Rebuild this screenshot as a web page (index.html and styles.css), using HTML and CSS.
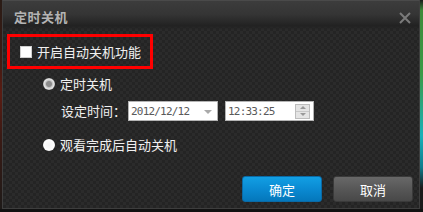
FILE: index.html
```html
<!DOCTYPE html>
<html lang="zh-CN">
<head>
<meta charset="utf-8">
<title>定时关机</title>
<link rel="stylesheet" href="styles.css">
</head>
<body>
<div class="stage">
  <div class="edge-left"></div>
  <div class="dialog">
    <div class="titlebar">
      <span class="title">定时关机</span>
      <svg class="close" width="12" height="12" viewBox="0 0 12 12"><path d="M1 1L11 11M11 1L1 11" stroke="#7a7a7a" stroke-width="2" fill="none"/></svg>
    </div>
    <div class="highlight">
      <span class="checkbox"></span>
      <span class="label">开启自动关机功能</span>
    </div>
    <div class="radio-row first">
      <span class="radio checked"></span>
      <span class="label">定时关机</span>
    </div>
    <div class="time-row">
      <span class="label time-label">设定时间：</span>
      <div class="field date">
        <span class="value">2012/12/12</span>
        <span class="arrow"></span>
      </div>
      <div class="field time">
        <span class="value">12:33:25</span>
        <span class="spinner">
          <span class="spin up"></span>
          <span class="spin down"></span>
        </span>
      </div>
    </div>
    <div class="radio-row second">
      <span class="radio"></span>
      <span class="label">观看完成后自动关机</span>
    </div>
    <div class="actions">
      <button class="btn primary">确定</button>
      <button class="btn secondary">取消</button>
    </div>
  </div>
  <div class="edge-right"></div>
</div>
</body>
</html>
```
FILE: styles.css
```css
html, body {
  margin: 0;
  padding: 0;
}
body {
  width: 423px;
  height: 212px;
  background: #121212;
  font-family: "Noto Sans CJK SC", "DejaVu Sans", sans-serif;
  overflow: hidden;
}
.stage {
  display: flex;
  height: 209px;
}
.edge-left {
  width: 2px;
  background: linear-gradient(#2a1c16 0, #3a1a12 25%, #5a1c12 45%, #3a1a14 65%, #1e1a18 100%);
}
.edge-right {
  width: 3px;
  background: linear-gradient(#1c1c1c 0, #3d8a3a 5%, #3a9a46 35%, #18b0b8 65%, #0c7c8c 80%, #1a1a1a 90%);
}
.dialog {
  width: 416px;
  border: 1px solid #3e3e3e;
  border-top-color: #4a4a4a;
  background: repeating-conic-gradient(#2b2b2b 0 25%, #242424 0 50%) 0 0 / 6px 6px;
  display: flex;
  flex-direction: column;
}
.titlebar {
  height: 29px;
  display: flex;
  align-items: center;
  justify-content: space-between;
  padding: 0 8px 0 11px;
  background: linear-gradient(#3c3c3c 0, #353535 45%, #222 85%, rgba(34,34,34,0) 100%);
}
.title {
  color: #b4b4b4;
  font-size: 13px;
  font-weight: bold;
  letter-spacing: 0.5px;
  margin-top: 2px;
}
.close {
  display: block;
  margin-top: 4px;
}
.highlight {
  margin: 4px 0 0 4px;
  width: 130px;
  height: 29px;
  border: 3px solid #ff0000;
  display: flex;
  align-items: center;
  padding-left: 10px;
  box-sizing: content-box;
}
.checkbox {
  width: 10px;
  height: 10px;
  background: #fff;
  border: 1px solid #cfcfcf;
  margin-right: 5px;
  margin-top: 1px;
}
.label {
  color: #f0f0f0;
  font-size: 13px;
  line-height: 16px;
}
.radio-row {
  display: flex;
  align-items: center;
  margin-left: 40px;
  height: 16px;
}
.radio-row.first {
  margin-top: 7px;
}
.radio-row.second {
  margin-top: 16px;
}
.radio {
  width: 12px;
  height: 12px;
  border-radius: 50%;
  background: radial-gradient(circle, #f4f4f4 0, #ffffff 60%, #cfcfcf 100%);
  margin-right: 5px;
}
.radio.checked {
  background: radial-gradient(circle, #8c8c8c 0, #8c8c8c 2.5px, #c4c4c4 3.5px, #e6e6e6 5px, #b0b0b0 6px);
}
.time-row {
  display: flex;
  align-items: center;
  margin: 9px 0 0 58px;
  height: 20px;
}
.time-label {
  width: 67px;
}
.field {
  height: 18px;
  background: #fff;
  border: 1px solid #b4b4b4;
  display: flex;
  align-items: center;
  box-sizing: content-box;
}
.date {
  width: 88px;
}
.time {
  width: 87px;
  margin-left: 7px;
}
.value {
  font-family: "DejaVu Sans Mono", monospace;
  font-size: 11px;
  letter-spacing: -0.8px;
  color: #5a5a5a;
  padding-left: 2px;
  flex: 1;
}
.arrow {
  width: 0;
  height: 0;
  border-left: 4px solid transparent;
  border-right: 4px solid transparent;
  border-top: 4px solid #aaa;
  margin-right: 5px;
  margin-top: 2px;
}
.spinner {
  width: 13px;
  height: 13px;
  margin-right: 3px;
  display: flex;
  flex-direction: column;
  border: 1px solid #bdbdbd;
  background: #e4e4e4;
}
.spin {
  flex: 1;
  display: flex;
  align-items: center;
  justify-content: center;
}
.spin.up {
  border-bottom: 1px solid #c8c8c8;
}
.spin::after {
  content: "";
  width: 0;
  height: 0;
  border-left: 3px solid transparent;
  border-right: 3px solid transparent;
}
.spin.up::after {
  border-bottom: 3px solid #999;
}
.spin.down::after {
  border-top: 3px solid #999;
}
.actions {
  display: flex;
  justify-content: flex-end;
  gap: 11px;
  margin: 23px 6px 0 0;
}
.btn {
  width: 80px;
  height: 26px;
  border-radius: 3px;
  font-family: "Noto Sans CJK SC", sans-serif;
  font-size: 13px;
  color: #fff;
  padding: 0;
  cursor: pointer;
}
.primary {
  background: linear-gradient(#129fe4, #0a8ad2 50%, #0477bb);
  border: 1px solid #0a6aa6;
}
.secondary {
  background: linear-gradient(#686868, #575757 50%, #484848);
  border: 1px solid #3a3a3a;
}
```
